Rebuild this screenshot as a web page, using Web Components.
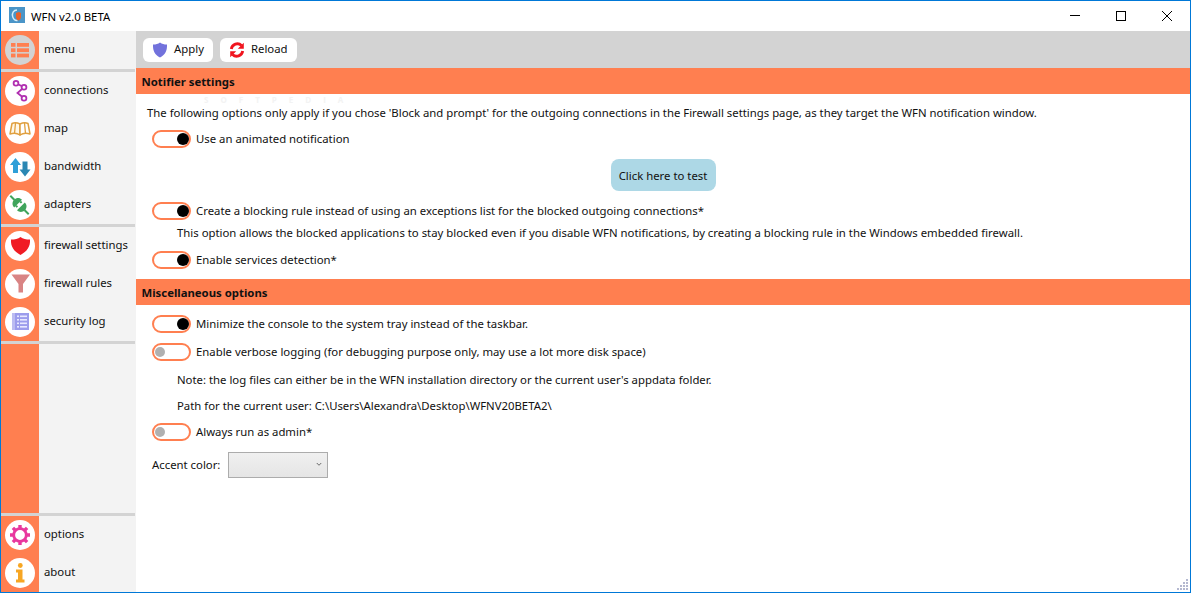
<!DOCTYPE html>
<html>
<head>
<meta charset="utf-8">
<title>WFN v2.0 BETA</title>
<style>
  html, body { margin: 0; height: 100%; }
  body { font: 11.35px "Noto Sans", "Open Sans", sans-serif; color: #111; overflow: hidden; }
</style>
</head>
<body>
<wfn-window>
  <wfn-titlebar slot="top" caption="WFN v2.0 BETA"></wfn-titlebar>
  <wfn-sidebar slot="side">
    <nav-item label="menu" variant="grey"><svg viewBox="0 0 30 30"><g fill="#ff7f50"><rect x="6" y="8" width="4.500" height="3.800"/><rect x="12" y="8" width="12" height="3.800"/><rect x="6" y="13.300" width="4.500" height="3.800"/><rect x="12" y="13.300" width="12" height="3.800"/><rect x="6" y="18.600" width="4.500" height="3.800"/><rect x="12" y="18.600" width="12" height="3.800"/></g></svg></nav-item>
    <nav-sep></nav-sep>
    <nav-item label="connections"><svg viewBox="0 0 30 30"><path d="M11 7.300 L19 11.300 L12.500 17 L19 22.300" fill="none" stroke="#b02fb0" stroke-width="1.800"/><g fill="#fff" stroke="#b02fb0" stroke-width="1.800"><circle cx="11" cy="7.300" r="2.400"/><circle cx="19" cy="11.300" r="2.400"/><circle cx="19" cy="22.300" r="2.400"/></g></svg></nav-item>
    <nav-item label="map"><svg viewBox="0 0 30 30"><path d="M15 10 C12 8.500 9 8.500 7 9.500 L5 20 C8 19 12 19 15 21 Z" fill="#fff8e8" stroke="#e0a040" stroke-width="1.500" stroke-linejoin="round"/><path d="M15 10 C18 8.500 21 8.500 23 9.500 L25 20 C22 19 18 19 15 21 Z" fill="#fff" stroke="#e0a040" stroke-width="1.500" stroke-linejoin="round"/><path d="M10.500 9 L9.500 19.500 M19.500 9 L20.500 19.500" stroke="#e0a040" stroke-width="1.300"/></svg></nav-item>
    <nav-item label="bandwidth"><svg viewBox="0 0 30 30"><path d="M10.500 6 L16 13 H13 V21 H8 V13 H5 Z" fill="#2f9fd8"/><path d="M20 24.500 L25.500 17.500 H22.500 V9.500 H17.500 V17.500 H14.500 Z" fill="#2b87b3"/></svg></nav-item>
    <nav-item label="adapters"><svg viewBox="0 0 30 30"><g transform="rotate(45 14.500 15)" fill="#3fa45b"><rect x="1.500" y="14" width="6" height="2"/><path d="M12.500 9.500 V20.500 C9 20.500 7 18 7 15 C7 12 9 9.500 12.500 9.500 Z"/><rect x="12.500" y="11" width="2" height="2"/><rect x="12.500" y="17" width="2" height="2"/><path d="M16.500 9.500 V20.500 C20 20.500 22 18 22 15 C22 12 20 9.500 16.500 9.500 Z"/><rect x="21.500" y="14" width="6" height="2"/></g></svg></nav-item>
    <nav-sep></nav-sep>
    <nav-item label="firewall settings"><svg viewBox="0 0 30 30"><path d="M15.500 6 C18 8 21 8.500 25 8.500 C25.500 15.500 22 20.500 15.500 24 C9 20.500 5.500 15.500 6 8.500 C10 8.500 13 8 15.500 6 Z" fill="#f01c24"/></svg></nav-item>
    <nav-item label="firewall rules"><svg viewBox="0 0 30 30"><path d="M6.500 5.500 H25 L18 15 V23.500 H13.500 V15 Z" fill="#d98484"/></svg></nav-item>
    <nav-item label="security log"><svg viewBox="0 0 30 30"><rect x="7" y="6" width="3" height="17" fill="#bcbcf2"/><rect x="10" y="6" width="14" height="17" fill="#9c9cec"/><g fill="#e8e8ff"><rect x="12" y="8.500" width="2" height="1.600"/><rect x="15" y="8.500" width="7" height="1.600"/><rect x="12" y="12" width="2" height="1.600"/><rect x="15" y="12" width="7" height="1.600"/><rect x="12" y="15.500" width="2" height="1.600"/><rect x="15" y="15.500" width="7" height="1.600"/><rect x="12" y="19" width="2" height="1.600"/><rect x="15" y="19" width="7" height="1.600"/></g></svg></nav-item>
    <nav-sep></nav-sep>
    <nav-spacer></nav-spacer>
    <nav-sep></nav-sep>
    <nav-item label="options"><svg viewBox="0 0 30 30"><g stroke="#e8389e" fill="none"><circle cx="15" cy="15" r="6.300" stroke-width="2.800"/><path stroke-width="3.400" d="M15 5 V8 M15 22 V25 M5 15 H8 M22 15 H25 M7.900 7.900 L10 10 M20 20 L22.100 22.100 M7.900 22.100 L10 20 M20 10 L22.100 7.900"/></g></svg></nav-item>
    <nav-item label="about"><svg viewBox="0 0 30 30"><g fill="#f7a623"><circle cx="15.300" cy="7.500" r="2.400"/><path d="M11 11.500 H17.500 V21.500 H19.500 V24.500 H11 V21.500 H13 V14.500 H11 Z"/></g></svg></nav-item>
  </wfn-sidebar>
  <wfn-toolbar slot="main">
    <tool-button label="Apply"><svg viewBox="0 0 16 16"><path d="M8 .5 C10 2 12 2.500 15 2.500 C15.300 9 13 13 8 15.500 C3 13 .7 9 1 2.500 C4 2.500 6 2 8 .5 Z" fill="#7272dc"/></svg></tool-button>
    <tool-button label="Reload"><svg viewBox="0 0 16 16"><g fill="none" stroke="#f0141e" stroke-width="2.800"><path d="M2.300 7 A6 6 0 0 1 12.500 3.600"/><path d="M13.700 9 A6 6 0 0 1 3.500 12.400"/></g><path d="M14.800 .8 V6.800 H8.800 Z M1.200 15.200 V9.200 H7.200 Z" fill="#f0141e"/></svg></tool-button>
  </wfn-toolbar>
  <wfn-page slot="main">
    <section-bar>Notifier settings</section-bar>
    <page-text style="--pad:147px;--before:6px">The following options only apply if you chose 'Block and prompt' for the outgoing connections in the Firewall settings page, as they target the WFN notification window.</page-text>
    <toggle-row checked>Use an animated notification</toggle-row>
    <test-button>Click here to test</test-button>
    <toggle-row checked>Create a blocking rule instead of using an exceptions list for the blocked outgoing connections*</toggle-row>
    <page-text style="--pad:177px;--h:18px">This option allows the blocked applications to stay blocked even if you disable WFN notifications, by creating a blocking rule in the Windows embedded firewall.</page-text>
    <toggle-row checked style="--before:5px;--after:6px">Enable services detection*</toggle-row>
    <section-bar>Miscellaneous options</section-bar>
    <toggle-row checked style="--before:6px">Minimize the console to the system tray instead of the taskbar.</toggle-row>
    <toggle-row style="--before:2px">Enable verbose logging (for debugging purpose only, may use a lot more disk space)</toggle-row>
    <page-text style="--pad:177px;--before:2px">Note: the log files can either be in the WFN installation directory or the current user's appdata folder.</page-text>
    <page-text style="--pad:177px">Path for the current user: C:\Users\Alexandra\Desktop\WFNV20BETA2\</page-text>
    <toggle-row>Always run as admin*</toggle-row>
    <accent-picker></accent-picker>
  </wfn-page>
</wfn-window>
<script>
function tpl(html) {
  const t = document.createElement('template');
  t.innerHTML = html;
  return t;
}

class Base extends HTMLElement {
  connectedCallback() {
    if (this.shadowRoot) return;
    this.attachShadow({ mode: 'open' });
    this.shadowRoot.appendChild(this.constructor.template.content.cloneNode(true));
    if (this.init) this.init();
  }
}

class WfnWindow extends Base {
  static template = tpl(`
    <style>
      :host { display: grid; box-sizing: border-box; width: 1191px; height: 593px; background: #fff;
              border: 1px solid #0078d7;
              grid-template: 30px 1fr / 135px 1fr; }
      .top { grid-column: 1 / 3; display: block; }
      .side { display: flex; flex-direction: column; min-height: 0; }
      .main { display: flex; flex-direction: column; min-height: 0; position: relative; }
      .mark { position: absolute; left: 68px; top: 63px; font: bold 8px/11px "Open Sans", sans-serif; letter-spacing: 12px; color: #f3f3f3; pointer-events: none; }
      .grip { position: absolute; right: 1px; bottom: 1px; width: 14px; height: 14px; }
    </style>
    <div class="top"><slot name="top"></slot></div>
    <div class="side"><slot name="side"></slot></div>
    <div class="main">
      <slot name="main"></slot>
      <div class="mark">SOFTPEDIA</div>
      <svg class="grip" viewBox="0 0 14 14"><g fill="#b4b8d0"><rect x="11" y="2" width="2" height="2"/><rect x="8" y="5" width="2" height="2"/><rect x="11" y="5" width="2" height="2"/><rect x="5" y="8" width="2" height="2"/><rect x="8" y="8" width="2" height="2"/><rect x="11" y="8" width="2" height="2"/><rect x="2" y="11" width="2" height="2"/><rect x="5" y="11" width="2" height="2"/><rect x="8" y="11" width="2" height="2"/><rect x="11" y="11" width="2" height="2"/></g></svg>
    </div>`);
}

class WfnTitlebar extends Base {
  static template = tpl(`
    <style>
      :host { display: flex; align-items: center; height: 30px; background: #fff; }
      .logo { width: 16px; height: 16px; margin: 0 6px 2px 8px; }
      .cap { flex: 1; color: #000; }
      .btn { width: 46px; height: 30px; display: flex; align-items: center; justify-content: center; }
      svg.g { width: 12px; height: 12px; margin-bottom: 1px; }
    </style>
    <svg class="logo" viewBox="0 0 16 16"><rect width="16" height="16" fill="#4a95c8"/><path d="M8 3 C4.500 3 3 6 3.500 9 C4 12 6 14 8.500 13.500" fill="none" stroke="#d8eef8" stroke-width="1.500"/><path d="M7 6 L10 5 L12 6 V10 C12 12 10.500 13 9.500 13.500 C8 13 7 12 7 10 Z" fill="#e8622c"/></svg>
    <span class="cap"></span>
    <div class="btn"><svg class="g" viewBox="0 0 12 12"><rect x="1" y="5" width="10" height="1" fill="#000"/></svg></div>
    <div class="btn"><svg class="g" viewBox="0 0 12 12"><rect x="1.500" y="1.500" width="9" height="9" fill="none" stroke="#000"/></svg></div>
    <div class="btn"><svg class="g" viewBox="0 0 12 12"><path d="M1 1 L11 11 M11 1 L1 11" stroke="#000" stroke-width="1"/></svg></div>`);
  init() { this.shadowRoot.querySelector('.cap').textContent = this.getAttribute('caption'); }
}

class WfnSidebar extends Base {
  static template = tpl(`
    <style>
      :host { display: flex; flex-direction: column; flex: 1; min-height: 0;
              background: linear-gradient(90deg, #ff7f50 38px, #f3f3f3 38px); }
    </style>
    <slot></slot>`);
}

class NavItem extends Base {
  static template = tpl(`
    <style>
      :host { display: flex; align-items: center; height: 38px; flex: none; }
      .disc { width: 30px; height: 30px; margin-left: 4px; border-radius: 50%; background: #fff; display: block; }
      :host([variant=grey]) .disc { background: #d3d3d3; }
      ::slotted(svg) { display: block; width: 30px; height: 30px; }
      .label { margin: 0 0 4px 9px; }
    </style>
    <div class="disc"><slot></slot></div>
    <span class="label"></span>`);
  init() { this.shadowRoot.querySelector('.label').textContent = this.getAttribute('label'); }
}

class NavSep extends Base {
  static template = tpl(`<style>:host { display: block; height: 3px; flex: none; margin-right: 1px; background: #d3d3d3; }</style>`);
}

class NavSpacer extends Base {
  static template = tpl(`<style>:host { display: block; flex: 1; }</style>`);
}

class WfnToolbar extends Base {
  static template = tpl(`
    <style>:host { display: flex; align-items: center; gap: 7px; height: 37px; flex: none; box-sizing: border-box; padding-left: 7px; background: #d3d3d3; }</style>
    <slot></slot>`);
}

class ToolButton extends Base {
  static template = tpl(`
    <style>
      :host { display: flex; align-items: center; height: 24px; padding: 0 9px; background: #fff; border-radius: 6px; gap: 6px; }
      ::slotted(svg) { display: block; width: 16px; height: 16px; }
      .label { margin-bottom: 2px; }
    </style>
    <slot></slot><span class="label"></span>`);
  init() { this.shadowRoot.querySelector('.label').textContent = this.getAttribute('label'); }
}

class WfnPage extends Base {
  static template = tpl(`
    <style>:host { display: flex; flex-direction: column; flex: 1; min-height: 0; background: #fff; }</style>
    <slot></slot>`);
}

class SectionBar extends Base {
  static template = tpl(`
    <style>:host { display: flex; align-items: center; height: 26px; flex: none; padding-left: 5.500px; background: #ff7f50; font-weight: 700; color: #111; }</style>
    <slot></slot>`);
}

class PageText extends Base {
  static template = tpl(`
    <style>
      :host { display: flex; align-items: center; height: var(--h, 26px); flex: none; margin-top: var(--before, 0); padding-left: calc(var(--pad, 147px) - 136px); }
      span { margin-bottom: 2px; }
    </style>
    <span><slot></slot></span>`);
}

class ToggleRow extends Base {
  static template = tpl(`
    <style>
      :host { display: flex; align-items: center; height: 26px; flex: none; padding-left: 16px; gap: 5px;
              margin-top: var(--before, 0); margin-bottom: var(--after, 0); }
      .track { box-sizing: border-box; width: 39px; height: 18px; border: 2px solid #ff7f50; border-radius: 9px; display: flex; align-items: center; justify-content: flex-start; padding: 0 1px; background: #fff; }
      .dot { width: 10px; height: 10px; border-radius: 50%; background: #b0b0b0; }
      :host([checked]) .track { justify-content: flex-end; padding: 0; }
      :host([checked]) .dot { width: 12px; height: 12px; background: #000; }
      span { margin-bottom: 2px; }
    </style>
    <div class="track"><div class="dot"></div></div><span><slot></slot></span>`);
}

class TestButton extends Base {
  static template = tpl(`
    <style>
      :host { display: flex; justify-content: center; flex: none; height: 46px; padding-top: 7px; box-sizing: border-box; }
      .b { display: flex; align-items: center; justify-content: center; width: 105px; height: 32px; border-radius: 8px; background: #add8e6; }
    </style>
    <div class="b"><slot></slot></div>`);
}

class AccentPicker extends Base {
  static template = tpl(`
    <style>
      :host { display: flex; align-items: center; flex: none; height: 26px; margin-top: 7px; padding-left: 16px; gap: 8px; }
      span { margin-bottom: 2px; }
      .combo { box-sizing: border-box; width: 100px; height: 26px; border: 1px solid #acacac; background: linear-gradient(#f0f0f0, #e5e5e5); position: relative; }
      svg { position: absolute; right: 5px; top: 9px; width: 6px; height: 5px; }
    </style>
    <span>Accent color:</span>
    <div class="combo"><svg viewBox="0 0 8 6"><path d="M1 1 L4 4 L7 1" fill="none" stroke="#666" stroke-width="1.300"/></svg></div>`);
}

customElements.define('wfn-window', WfnWindow);
customElements.define('wfn-titlebar', WfnTitlebar);
customElements.define('wfn-sidebar', WfnSidebar);
customElements.define('nav-item', NavItem);
customElements.define('nav-sep', NavSep);
customElements.define('nav-spacer', NavSpacer);
customElements.define('wfn-toolbar', WfnToolbar);
customElements.define('tool-button', ToolButton);
customElements.define('wfn-page', WfnPage);
customElements.define('section-bar', SectionBar);
customElements.define('page-text', PageText);
customElements.define('toggle-row', ToggleRow);
customElements.define('test-button', TestButton);
customElements.define('accent-picker', AccentPicker);
</script>
</body>
</html>
